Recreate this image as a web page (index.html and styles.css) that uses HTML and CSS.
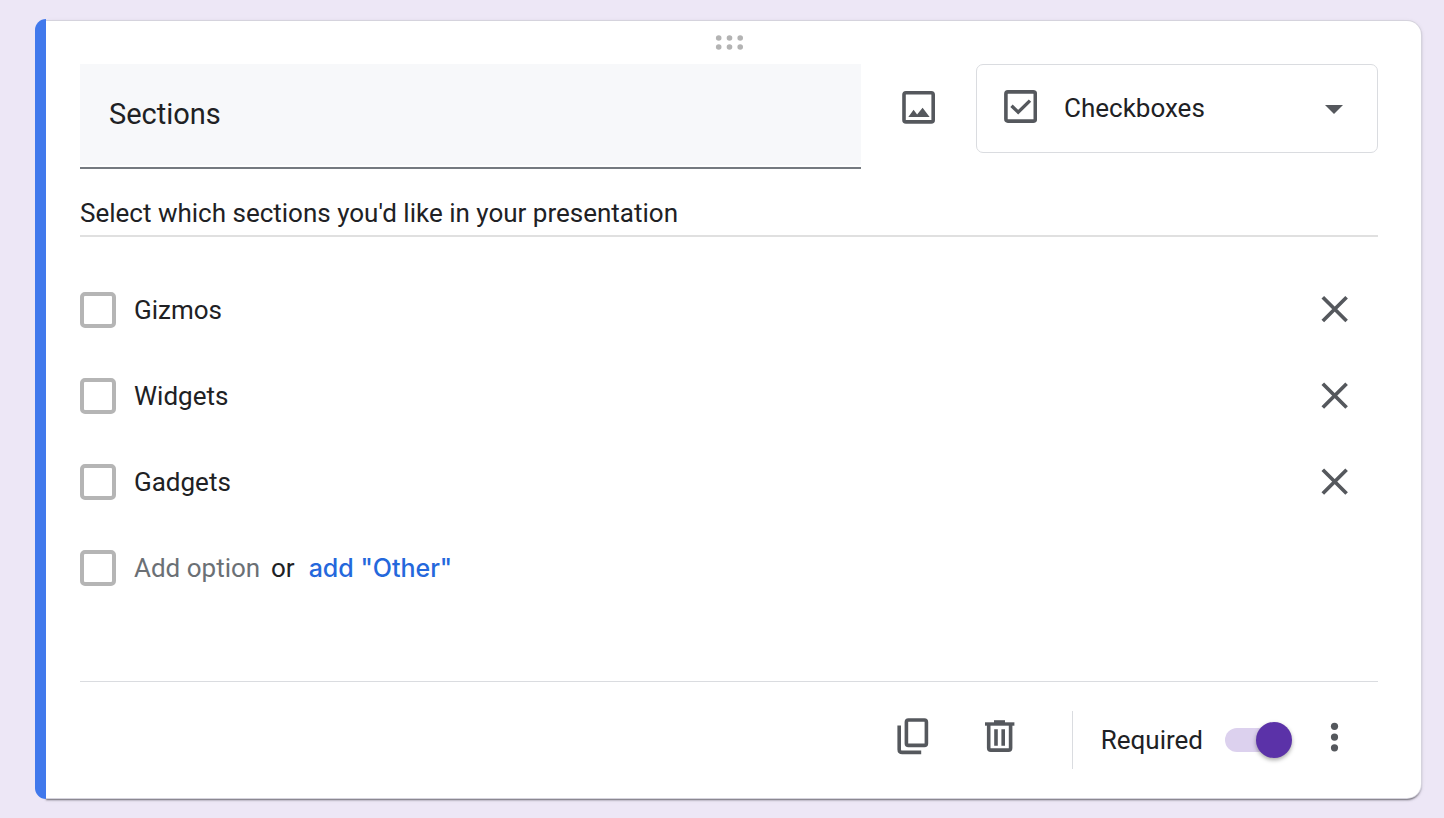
FILE: index.html
```html
<!DOCTYPE html>
<html lang="en">
<head>
<meta charset="utf-8">
<meta name="viewport" content="width=device-width, initial-scale=1">
<title>Question editor</title>
<link rel="stylesheet" href="styles.css">
</head>
<body>
<main class="question">
  <div class="accent"></div>
  <form class="card">
    <div class="grip">
      <svg width="28" height="15" viewBox="0 0 28 15" fill="#b3b3b3" aria-hidden="true">
        <circle cx="3.7" cy="3" r="2.8"/><circle cx="14.5" cy="3" r="2.8"/><circle cx="25.2" cy="3" r="2.8"/>
        <circle cx="3.7" cy="12" r="2.8"/><circle cx="14.5" cy="12" r="2.8"/><circle cx="25.2" cy="12" r="2.8"/>
      </svg>
    </div>

    <div class="heading">
      <div class="title-field">
        <input class="title-input" type="text" value="Sections" aria-label="Question">
      </div>
      <button class="image-button" type="button" aria-label="Add image">
        <svg width="44" height="44" viewBox="0 0 44 44" aria-hidden="true">
          <rect x="7" y="7.7" width="29.2" height="29.2" rx="2" fill="none" stroke="#55585d" stroke-width="3.6"/>
          <path d="M11.3 32 16.6 24.8 20.1 29.4 25.6 22.8 32.6 32Z" fill="#55585d"/>
        </svg>
      </button>
      <div class="type-field">
        <svg class="type-icon" width="33" height="33" viewBox="0 0 33 33" fill="none" stroke="#55585d" aria-hidden="true">
          <rect x="1.9" y="1.9" width="29.4" height="29.2" rx="2" stroke-width="3.6"/>
          <path d="M7.5 15.8 14.2 22.2 26 10.6" stroke-width="3.4"/>
        </svg>
        <select class="type-select" aria-label="Question type">
          <option>Checkboxes</option>
        </select>
        <svg class="type-arrow" width="18" height="9" viewBox="0 0 18 9" fill="#55585d" aria-hidden="true"><path d="M0 0H18L9 9Z"/></svg>
      </div>
    </div>

    <div class="description">
      <input class="description-input" type="text" value="Select which sections you'd like in your presentation" aria-label="Description">
    </div>

    <ul class="options">
      <li class="option">
        <input class="tick" type="checkbox" aria-label="Gizmos">
        <input class="option-input" type="text" value="Gizmos" aria-label="Option 1">
        <button class="icon-button" type="button" aria-label="Remove Gizmos">
          <svg width="44" height="44" viewBox="0 0 44 44" stroke="#55585d" stroke-width="3.7" aria-hidden="true"><path d="M9.8 9.2 33.6 33M33.6 9.2 9.8 33"/></svg>
        </button>
      </li>
      <li class="option">
        <input class="tick" type="checkbox" aria-label="Widgets">
        <input class="option-input" type="text" value="Widgets" aria-label="Option 2">
        <button class="icon-button" type="button" aria-label="Remove Widgets">
          <svg width="44" height="44" viewBox="0 0 44 44" stroke="#55585d" stroke-width="3.7" aria-hidden="true"><path d="M9.8 9.7 33.6 33.5M33.6 9.7 9.8 33.5"/></svg>
        </button>
      </li>
      <li class="option">
        <input class="tick" type="checkbox" aria-label="Gadgets">
        <input class="option-input" type="text" value="Gadgets" aria-label="Option 3">
        <button class="icon-button" type="button" aria-label="Remove Gadgets">
          <svg width="44" height="44" viewBox="0 0 44 44" stroke="#55585d" stroke-width="3.7" aria-hidden="true"><path d="M9.8 9.7 33.6 33.5M33.6 9.7 9.8 33.5"/></svg>
        </button>
      </li>
      <li class="option">
        <input class="tick" type="checkbox" aria-label="New option">
        <input class="add-input" type="text" placeholder="Add option" aria-label="Add option">
        <span class="or">or</span>
        <button class="other-button" type="button">add "Other"</button>
      </li>
    </ul>

    <div class="footer">
      <div class="actions">
        <button class="icon-button" type="button" aria-label="Duplicate">
          <svg width="44" height="44" viewBox="0 0 44 44" fill="none" stroke="#55585d" stroke-width="3.6" aria-hidden="true">
            <rect x="15.4" y="2" width="20" height="25.4" rx="2"/>
            <path d="M8.2 7.4V31.4Q8.2 34.4 11.2 34.4H30.2"/>
          </svg>
        </button>
        <button class="icon-button" type="button" aria-label="Delete">
          <svg width="44" height="44" viewBox="0 0 44 44" fill="none" stroke="#55585d" stroke-width="3.6" aria-hidden="true">
            <path d="M10.7 5.4V30Q10.7 32.1 12.8 32.1H30.5Q32.6 32.1 32.6 30V5.4"/>
            <path d="M7 6H36.4" stroke-width="3.4"/>
            <path d="M16 3.7H27" stroke-width="3"/>
            <path d="M18 11.2V27.8M25.2 11.2V27.8"/>
          </svg>
        </button>
      </div>
      <div class="settings">
        <label for="required">Required</label>
        <input class="switch" id="required" type="checkbox" role="switch" checked>
        <button class="icon-button" type="button" aria-label="More options">
          <svg width="44" height="44" viewBox="0 0 44 44" fill="#55585d" aria-hidden="true">
            <circle cx="21.5" cy="8.3" r="3.6"/><circle cx="21.5" cy="19.1" r="3.6"/><circle cx="21.5" cy="29.8" r="3.6"/>
          </svg>
        </button>
      </div>
    </div>
  </form>
</main>
</body>
</html>
```
FILE: styles.css
```css
* {
  box-sizing: border-box;
}

body {
  min-height: 100vh;
  margin: 0;
  padding: 19px 23px 19px 35px;
  background: #ede7f6;
  color: #202124;
  font-family: Roboto, "Liberation Sans", sans-serif;
  font-size: 26px;
  line-height: 32px;
}

input,
select,
button {
  margin: 0;
  padding: 0;
  border: 0;
  background: none;
  color: inherit;
  font: inherit;
}

button {
  cursor: pointer;
}

svg {
  display: block;
  flex: none;
}

.question {
  display: flex;
}

.accent {
  position: relative;
  z-index: 1;
  flex: none;
  width: 11px;
  border-radius: 12px 0 0 12px;
  background: #4179ec;
}

.card {
  flex: 1;
  min-width: 0;
  margin: 2px 0 1px;
  padding: 0 43px 0 34px;
  border-radius: 0 14px 14px 0;
  background: #fff;
  box-shadow: 0 0 0 1px #d5d3dd, 0 2px 2px rgba(60, 58, 66, 0.7), 0 1px 5px rgba(0, 0, 0, 0.12);
}

.grip {
  display: flex;
  align-items: center;
  justify-content: center;
  height: 43px;
}

.heading {
  display: flex;
  align-items: flex-start;
}

.title-field {
  flex: 1;
  min-width: 0;
  border-bottom: 2px solid #757a80;
  padding-bottom: 2px;
}

.title-input {
  display: block;
  width: 100%;
  height: 101px;
  padding: 0 29px 2px;
  background: #f7f8fa;
  font-size: 29px;
}

.image-button {
  display: flex;
  align-items: center;
  justify-content: center;
  width: 115px;
  height: 86px;
}

.type-field {
  display: flex;
  align-items: center;
  position: relative;
  width: 402px;
  height: 89px;
  border: 1px solid #dadce0;
  border-radius: 7px;
}

.type-select {
  appearance: none;
  width: 100%;
  height: 100%;
  padding: 0 0 2px 87px;
}

.type-icon {
  position: absolute;
  left: 27px;
  top: 25px;
  pointer-events: none;
}

.type-arrow {
  position: absolute;
  right: 34px;
  top: 40px;
  pointer-events: none;
}

.description {
  padding-top: 20px;
  border-bottom: 2px solid #e0e0e0;
}

.description-input {
  display: block;
  width: 100%;
  height: 46px;
  padding-top: 2px;
}

.options {
  margin: 30px 0 70px;
  padding: 0;
  list-style: none;
}

.option {
  display: flex;
  align-items: center;
  height: 86px;
  padding-right: 21px;
}

.tick {
  appearance: none;
  flex: none;
  width: 36px;
  height: 36px;
  margin-right: 18px;
  border: 4px solid #b5b5b5;
  border-radius: 5px;
}

.option-input {
  flex: 1;
  min-width: 0;
}

.icon-button {
  flex: none;
  width: 44px;
  height: 44px;
}

.add-input {
  width: 137px;
}

.add-input::placeholder {
  color: #6b7075;
  opacity: 1;
}

.other-button {
  margin-left: 14px;
  color: #2468dc;
  font-family: Inter, Lato, sans-serif;
  font-size: 25px;
  font-weight: 500;
}

.footer {
  display: flex;
  align-items: center;
  justify-content: flex-end;
  gap: 50px;
  height: 117px;
  padding-right: 21px;
  border-top: 1px solid #dadce0;
}

.actions {
  display: flex;
  gap: 43px;
}

.settings {
  display: flex;
  align-items: center;
  height: 58px;
  padding-left: 28px;
  border-left: 1px solid #dadce0;
}

.switch {
  appearance: none;
  display: grid;
  align-items: center;
  width: 67px;
  height: 36px;
  margin: 0 21px 0 22px;
}

.switch::before,
.switch::after {
  grid-area: 1 / 1;
  content: "";
}

.switch::before {
  width: 60px;
  height: 24px;
  border-radius: 12px;
  background: #dcd1ee;
}

.switch::after {
  justify-self: end;
  width: 36px;
  height: 36px;
  border-radius: 50%;
  background: #5b32a8;
  box-shadow: 0 2px 4px rgba(0, 0, 0, 0.35);
}
```
